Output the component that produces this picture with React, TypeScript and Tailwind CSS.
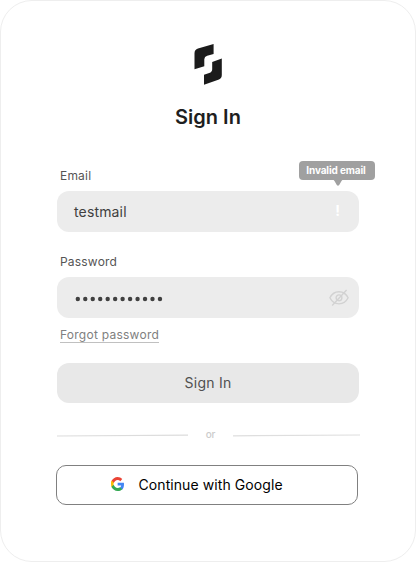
import React from "react";

function Logo() {
  return (
    <svg width="28" height="41" viewBox="0 0 28 41" fill="#1b1b1b" className="block">
      <path d="M0.5 25.2V9.3Q0.5 5.6 4 4.5L19.6 0V10L13.2 11.8Q10.3 12.7 10.3 15.2V22.2Z" />
      <path d="M27.8 14.6V31Q27.8 34.6 24.3 35.7L10 40.7V30.8L15.2 29Q18.2 28 18.2 25.2V18Z" />
    </svg>
  );
}

function GoogleIcon() {
  return (
    <svg width="13" height="14" viewBox="1 2 45 44" preserveAspectRatio="none" className="-mt-[2px] block">
      <path fill="#EA4335" d="M24 11.5c3.54 0 6.7 1.22 9.2 3.6l6.85-6.85C35.9 4.38 30.47 2 24 2 14.62 2 6.51 7.38 2.56 15.22l7.98 6.19C12.43 15.72 17.74 11.5 24 11.5z" />
      <path fill="#4285F4" d="M46 24.55c0-1.57-.15-3.09-.38-4.55H24v9.02h12.4c-.58 2.96-2.26 5.48-4.78 7.18l7.73 6C43.86 38.02 46 31.84 46 24.55z" />
      <path fill="#FBBC05" d="M10.53 28.59A14.5 14.5 0 0 1 9.77 24c0-1.6.27-3.14.76-4.59l-7.97-6.19A23.9 23.9 0 0 0 1 24c0 3.88.6 7.46 2.56 10.78z" />
      <path fill="#34A853" d="M24 46c6.48 0 11.93-1.85 15.89-5.81l-7.73-6C30 35.64 27.24 36.5 24 36.5c-6.26 0-11.57-4.22-13.47-9.91l-7.98 6.19C6.51 40.62 14.62 46 24 46z" />
    </svg>
  );
}

function EyeOffIcon() {
  return (
    <svg width="20" height="18" viewBox="0 0 20 18" fill="none" stroke="#d2d2d2" strokeWidth="1.4" className="block">
      <path d="M0.9 8.8C3 4.5 6.5 2.7 10 2.7S17 4.5 19.1 8.8C17 13 13.5 14.9 10 14.9S3 13 0.9 8.8Z" />
      <circle cx="10" cy="8.8" r="2.9" />
      <path d="M17.6 1.1L3.2 16.4" />
    </svg>
  );
}

export default function App() {
  return (
    <div className="flex h-[562px] w-[416px] flex-col items-center rounded-[32px] border border-[#eeeeee] bg-white pt-[43px] font-[Inter,sans-serif]">
      <Logo />
      <h1 className="mt-[18px] text-xl leading-7 font-semibold text-[#1e1e20]">Sign In</h1>

      <form className="mt-[37px] flex w-[302px] flex-col" onSubmit={(e) => e.preventDefault()}>
        <label className="ml-[3px] text-xs leading-4 tracking-[0.2px] text-[#555555]">Email</label>
        <div className="relative mt-[7px] flex h-[41px] items-center justify-between rounded-xl bg-[#ececec] pr-[19px] pl-[17px]">
          <span className="text-sm tracking-[0.15px] text-[#404040]">testmail</span>
          <span className="-mt-[2px] text-sm font-bold text-white">!</span>
          <div className="absolute -top-[30px] left-[242px] flex h-[19px] w-[76px] items-center justify-center rounded bg-[#a0a0a0] pr-[2px] text-[10px] font-bold tracking-[-0.12px] whitespace-nowrap text-white">
            Invalid email
            <svg width="12" height="7" viewBox="0 0 12 7" className="absolute top-[18px] left-[33px]">
              <path d="M0 0H12Q10.5 0.5 9.5 2L7.2 5.9Q6 7.4 4.8 5.9L2.5 2Q1.5 0.5 0 0Z" fill="#a0a0a0" />
            </svg>
          </div>
        </div>

        <label className="mt-[22px] ml-[3px] text-xs leading-4 tracking-[0.2px] text-[#555555]">Password</label>
        <div className="mt-[7px] flex h-[41px] items-center justify-between rounded-xl bg-[#ececec] pr-[10px] pl-[18px]">
          <svg width="90" height="6" viewBox="0 0 90 6" fill="#404040" className="mt-[2px] block">
            {Array.from({ length: 12 }, (_, i) => (
              <circle key={i} cx={2.8 + i * 7.47} cy="3" r="2.2" />
            ))}
          </svg>
          <EyeOffIcon />
        </div>
        <a className="mt-[9px] ml-[3px] h-4 self-start border-b border-[#c0c0c0] text-xs leading-4 tracking-[0.25px] text-[#808080]">
          Forgot password
        </a>

        <button className="mt-5 h-10 rounded-xl bg-[#e8e8e8] text-sm tracking-[0.25px] text-[#505050]">Sign In</button>

        <div className="mt-6 flex h-4 w-[303px] items-center">
          <svg width="131" height="3" className="block">
            <path d="M0 2L131 1.2" stroke="#dcdcdc" strokeWidth="1.2" />
          </svg>
          <span className="-mt-px w-[45px] text-center text-[10px] font-medium tracking-[-0.2px] text-[#cccccc]">or</span>
          <svg width="127" height="3" className="block">
            <path d="M0 1.8L127 1" stroke="#dedede" strokeWidth="1.2" />
          </svg>
        </div>

        <button className="mt-[22px] -ml-px flex h-10 w-[302px] items-center rounded-[10px] border border-[#808080] bg-white pl-[54px] text-sm tracking-[0.08px] text-black">
          <GoogleIcon />
          <span className="ml-[14.5px]">Continue with Google</span>
        </button>
      </form>
    </div>
  );
}
